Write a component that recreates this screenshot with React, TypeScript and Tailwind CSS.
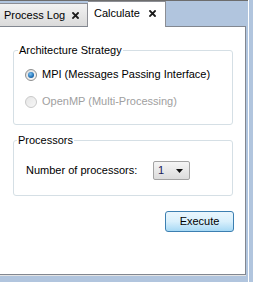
import React from 'react';

function CloseGlyph() {
  return (
    <svg width="7" height="7" viewBox="0 0 7 7" className="block">
      <path d="M1 1 L6 6 M6 1 L1 6" stroke="#1a1a1a" strokeWidth="1.8" strokeLinecap="square" />
    </svg>
  );
}

function Radio({ checked, disabled }: { checked?: boolean; disabled?: boolean }) {
  return (
    <span
      className={`flex items-center justify-center w-[12px] h-[12px] rounded-full border ${
        disabled
          ? 'border-[#c9c9c9] bg-gradient-to-br from-[#e6e6e6] to-[#f7f7f7]'
          : 'border-[#8e8f8f] bg-gradient-to-br from-[#dcdcdc] to-[#fbfbfb]'
      }`}
    >
      {checked && (
        <span className="w-[6px] h-[6px] rounded-full bg-[radial-gradient(circle_at_40%_35%,#7ec3f2,#1f6fb5_60%,#0c3f78)]" />
      )}
    </span>
  );
}

export default function App() {
  return (
    <div
      className="flex w-[253px] h-[282px] bg-[#b1c5de] text-[11px] text-black overflow-hidden"
      style={{ fontFamily: '"Liberation Sans", Arial, sans-serif' }}
    >
      {/* Left pane: tabs + tab body */}
      <div className="flex flex-col w-[248px] border-t border-[#6d6d6d]">
        {/* Tab strip */}
        <div className="flex items-end h-[25px]">
          <div className="flex items-center h-[23px] w-[88px] pl-[4px] border-t border-r border-[#8c8e94] bg-gradient-to-b from-[#f2f2f2] to-[#dadada] whitespace-nowrap">
            <span className="w-[68px] leading-none">Process Log</span>
            <CloseGlyph />
          </div>
          <div className="relative z-10 -mb-px flex items-center h-[26px] w-[78px] pl-[6px] pb-[2px] border-t border-r border-[#8c8e94] bg-white whitespace-nowrap">
            <span className="w-[55px] leading-none">Calculate</span>
            <CloseGlyph />
          </div>
        </div>

        {/* Tab body */}
        <div className="flex flex-col w-[246px] h-[249px] bg-white border-t border-r border-b border-[#828790] shadow-[0_1px_0_#e4e4e4]">
          <fieldset className="mt-[17px] ml-[13px] w-[220px] h-[81px] border border-[#d5dfe5] rounded-[3px]">
            <legend className="ml-[4px] px-[1px] leading-[13px]">Architecture Strategy</legend>
            <div className="flex items-center gap-[5px] mt-[11px] ml-[11px] h-[13px]">
              <Radio checked />
              <span>MPI (Messages Passing Interface)</span>
            </div>
            <div className="flex items-center gap-[5px] mt-[14px] ml-[11px] h-[13px] text-[#a0a0a0]">
              <Radio disabled />
              <span>OpenMP (Multi-Processing)</span>
            </div>
          </fieldset>

          <fieldset className="mt-[9px] ml-[13px] w-[220px] h-[62px] border border-[#d5dfe5] rounded-[3px]">
            <legend className="ml-[3px] px-[1px] leading-[13px]">Processors</legend>
            <div className="flex items-center mt-[14px] ml-[12px]">
              <span className="w-[127px]">Number of processors:</span>
              <div className="flex items-center justify-between w-[37px] h-[19px] pl-[4px] pr-[6px] border border-[#a3a3a3] rounded-[2px] bg-gradient-to-b from-[#f5f5f5] to-[#dcdcdc]">
                <span className="text-[#1a1a5a]">1</span>
                <svg width="7" height="4" viewBox="0 0 7 4" className="block">
                  <path d="M0 0 H7 L3.5 4 Z" fill="#111" />
                </svg>
              </div>
            </div>
          </fieldset>

          <div className="flex justify-end mt-[15px] mr-[11px]">
            <button className="w-[69px] h-[21px] rounded-[3px] border border-[#3c7fb1] bg-gradient-to-b from-[#eaf6fd] via-[#d9f0fc] to-[#a7d9f5] text-[11px] leading-none">
              Execute
            </button>
          </div>
        </div>
      </div>

      {/* Right splitter edge */}
      <div className="w-[5px] h-full border-l border-white" />
    </div>
  );
}
